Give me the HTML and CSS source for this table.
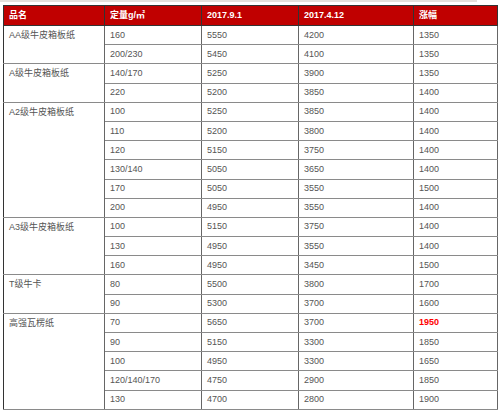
FILE: index.html
```html
<!DOCTYPE html>
<html lang="zh">
<head>
<meta charset="utf-8">
<title>价格表</title>
<link rel="stylesheet" href="styles.css">
</head>
<body>
<div class="topbar"></div>
<table class="price">
  <colgroup>
    <col class="c1"><col class="c2"><col class="c3"><col class="c4"><col class="c5">
  </colgroup>
  <thead>
    <tr><th>品名</th><th>定量g/㎡</th><th>2017.9.1</th><th>2017.4.12</th><th>涨幅</th></tr>
  </thead>
  <tbody>
    <tr class="grp"><td rowspan="2" class="name">AA级牛皮箱板纸</td><td>160</td><td>5550</td><td>4200</td><td>1350</td></tr>
    <tr><td>200/230</td><td>5450</td><td>4100</td><td>1350</td></tr>
    <tr class="grp"><td rowspan="2" class="name">A级牛皮箱板纸</td><td>140/170</td><td>5250</td><td>3900</td><td>1350</td></tr>
    <tr><td>220</td><td>5200</td><td>3850</td><td>1400</td></tr>
    <tr class="grp"><td rowspan="6" class="name">A2级牛皮箱板纸</td><td>100</td><td>5250</td><td>3850</td><td>1400</td></tr>
    <tr><td>110</td><td>5200</td><td>3800</td><td>1400</td></tr>
    <tr><td>120</td><td>5150</td><td>3750</td><td>1400</td></tr>
    <tr><td>130/140</td><td>5050</td><td>3650</td><td>1400</td></tr>
    <tr><td>170</td><td>5050</td><td>3550</td><td>1500</td></tr>
    <tr><td>200</td><td>4950</td><td>3550</td><td>1400</td></tr>
    <tr class="grp"><td rowspan="3" class="name">A3级牛皮箱板纸</td><td>100</td><td>5150</td><td>3750</td><td>1400</td></tr>
    <tr><td>130</td><td>4950</td><td>3550</td><td>1400</td></tr>
    <tr><td>160</td><td>4950</td><td>3450</td><td>1500</td></tr>
    <tr class="grp"><td rowspan="2" class="name">T级牛卡</td><td>80</td><td>5500</td><td>3800</td><td>1700</td></tr>
    <tr><td>90</td><td>5300</td><td>3700</td><td>1600</td></tr>
    <tr class="grp"><td rowspan="5" class="name">高强瓦楞纸</td><td>70</td><td>5650</td><td>3700</td><td class="hot">1950</td></tr>
    <tr><td>90</td><td>5150</td><td>3300</td><td>1850</td></tr>
    <tr><td>100</td><td>4950</td><td>3300</td><td>1650</td></tr>
    <tr><td>120/140/170</td><td>4750</td><td>2900</td><td>1850</td></tr>
    <tr><td>130</td><td>4700</td><td>2800</td><td>1900</td></tr>
  </tbody>
</table>
</body>
</html>
```

FILE: styles.css
```css
html, body {
  margin: 0;
  padding: 0;
  background: #ffffff;
}

body {
  font-family: "Liberation Sans", Arial, "Noto Sans CJK SC", sans-serif;
  font-size: 9px;
  color: #555555;
}

.topbar {
  width: 477px;
  height: 2px;
  background: #e4e0dc;
}

.price {
  margin: 3px 0 0 3px;
  width: 494px;
  border-collapse: collapse;
  table-layout: fixed;
  border: 1px solid #333333;
}

.c1 { width: 101px; }
.c2 { width: 97px; }
.c3 { width: 97px; }
.c4 { width: 115px; }
.c5 { width: 84px; }

.price th {
  height: 19px;
  padding: 0 5px;
  background: #c00000;
  color: #ffffff;
  font-weight: bold;
  text-align: left;
  border: 1px solid #333333;
  line-height: 11px;
}

.price td {
  height: 18.2px;
  padding: 0 5px;
  border: 1px solid #8a8a8a;
  border-left-color: #666666;
  border-right-color: #666666;
  text-align: left;
  line-height: 11px;
  white-space: nowrap;
}

.price tr.grp td {
  border-top-color: #333333;
}

.price td.name {
  vertical-align: top;
  padding-top: 4px;
  border-left-color: #333333;
}

.price td.hot {
  color: #ff0000;
  font-weight: bold;
}
```
